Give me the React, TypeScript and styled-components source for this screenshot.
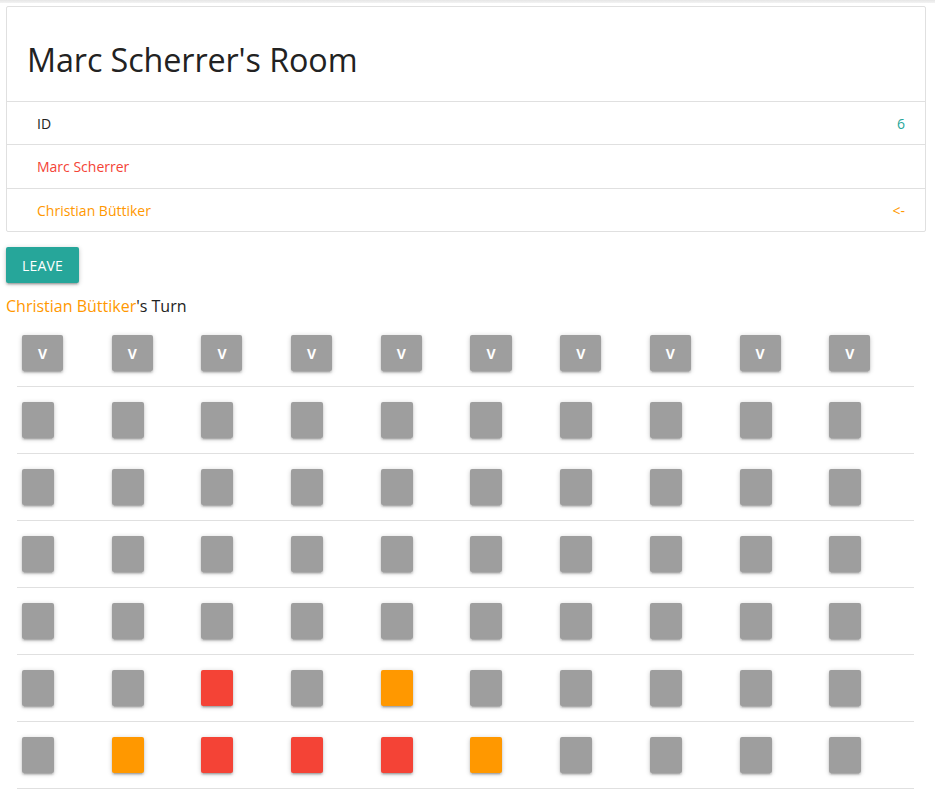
import React from "react";
import styled, { createGlobalStyle } from "styled-components";

const GlobalStyle = createGlobalStyle`
  html, body { margin: 0; padding: 0; background: #fff; }
  body {
    font-family: "Open Sans", "Noto Sans", "Liberation Sans", sans-serif;
    font-size: 15px;
    color: rgba(0,0,0,0.87);
  }
`;

const TopShade = styled.div`
  height: 3px;
  background: linear-gradient(#e6e6e6, #f3f3f3);
`;

const Page = styled.div`
  padding: 3px 9px 0 6px;
`;

const Collection = styled.div`
  border: 1px solid #e0e0e0;
  border-radius: 2px;
`;

const Header = styled.div`
  height: 94px;
  padding: 0 20px;
  display: flex;
  align-items: center;
  border-bottom: 1px solid #e0e0e0;
`;

const Title = styled.h4`
  margin: 10px 0 0;
  font-size: 32.3px;
  font-weight: 400;
  line-height: 40px;
  color: #222;
  letter-spacing: -0.1px;
`;

const Item = styled.div<{ $last?: boolean; $tall?: boolean }>`
  height: ${(p) => (p.$tall ? "43px" : "42px")};
  padding: 0 20px 0 30px;
  display: flex;
  align-items: center;
  justify-content: space-between;
  font-size: 14px;
  border-bottom: ${(p) => (p.$last ? "none" : "1px solid #e0e0e0")};
`;

const Label = styled.span<{ $color: string }>`
  color: ${(p) => p.$color};
`;

const LeaveButton = styled.button`
  margin-top: 15px;
  height: 36px;
  padding: 0 16px;
  border: none;
  border-radius: 2px;
  background: #26a69a;
  color: #fff;
  font-family: inherit;
  font-size: 14px;
  text-transform: uppercase;
  letter-spacing: 0.2px;
  box-shadow: 0 2px 2px 0 rgba(0,0,0,0.14), 0 3px 1px -2px rgba(0,0,0,0.12), 0 1px 5px 0 rgba(0,0,0,0.2);
  cursor: pointer;
`;

const Turn = styled.h6`
  margin: 12px 0 0;
  font-size: 16px;
  font-weight: 400;
  line-height: 22px;
  color: #222;
`;

const Orange = styled.span`
  color: #ff9800;
`;

const Board = styled.table`
  margin: 3px 0 0 11px;
  width: 897px;
  border-collapse: collapse;
  table-layout: fixed;
`;

const Row = styled.tr`
  border-bottom: 1px solid #e0e0e0;
`;

const Cell = styled.td`
  padding: 15px 5px;
  vertical-align: middle;
  height: 36px;
`;

const colors: Record<string, string> = {
  g: "#9e9e9e",
  r: "#f44336",
  o: "#ff9800",
};

const Chip = styled.button<{ $c: string; $label?: boolean }>`
  display: block;
  height: 36px;
  min-width: 32px;
  padding: 0 ${(p) => (p.$label ? "16px" : "0")};
  border: none;
  border-radius: 2px;
  background: ${(p) => colors[p.$c]};
  color: #fff;
  font-family: inherit;
  font-size: 14px;
  font-weight: 700;
  box-shadow: 0 2px 2px 0 rgba(0,0,0,0.14), 0 3px 1px -2px rgba(0,0,0,0.12), 0 1px 5px 0 rgba(0,0,0,0.2);
  cursor: pointer;
`;

const board = [
  "gggggggggg",
  "gggggggggg",
  "gggggggggg",
  "gggggggggg",
  "ggrgoggggg",
  "gorrrogggg",
];

export default function App() {
  return (
    <>
      <GlobalStyle />
      <TopShade />
      <Page>
        <Collection>
          <Header>
            <Title>Marc Scherrer's Room</Title>
          </Header>
          <Item>
            <Label $color="#222">ID</Label>
            <Label $color="#26a69a">6</Label>
          </Item>
          <Item $tall>
            <Label $color="#f44336">Marc Scherrer</Label>
          </Item>
          <Item $last>
            <Label $color="#ff9800">Christian Büttiker</Label>
            <Label $color="#ff9800">&lt;-</Label>
          </Item>
        </Collection>
        <LeaveButton>Leave</LeaveButton>
        <Turn>
          <Orange>Christian Büttiker</Orange>'s Turn
        </Turn>
        <Board>
          <tbody>
            <Row>
              {Array.from({ length: 10 }).map((_, i) => (
                <Cell key={i}>
                  <Chip $c="g" $label>
                    V
                  </Chip>
                </Cell>
              ))}
            </Row>
            {board.map((r, ri) => (
              <Row key={ri}>
                {r.split("").map((c, ci) => (
                  <Cell key={ci}>
                    <Chip $c={c} />
                  </Cell>
                ))}
              </Row>
            ))}
          </tbody>
        </Board>
      </Page>
    </>
  );
}
